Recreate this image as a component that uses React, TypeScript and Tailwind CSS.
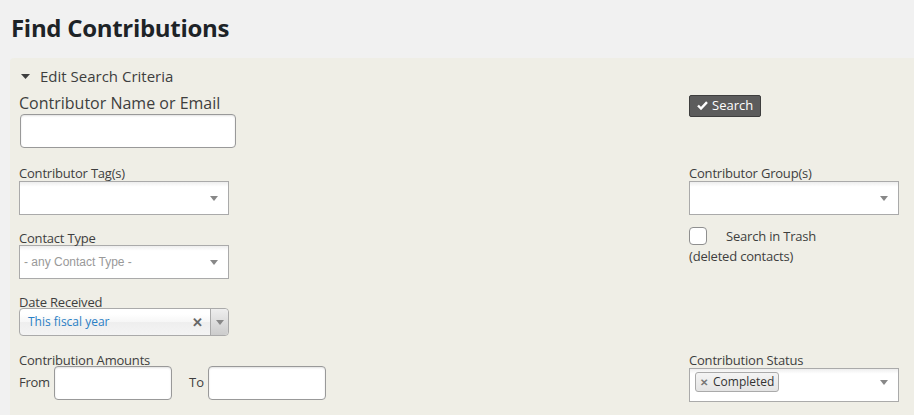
import React from "react";

const font = { fontFamily: '"Open Sans", "Noto Sans", sans-serif' };

function Arrow() {
  return (
    <svg width="8" height="5" viewBox="0 0 8 5" className="block">
      <path d="M0 0 L8 0 L4 5 Z" fill="#888" />
    </svg>
  );
}

function Select({ placeholder, width = "w-[210px]" }: { placeholder?: string; width?: string }) {
  return (
    <div
      className={`${width} h-[34px] border border-[#aaaaaa] bg-[linear-gradient(to_bottom,#eeeeee_0%,#ffffff_15%)] flex items-center justify-between pl-[4px] pr-[10px]`}
    >
      <span
        className="text-[12px] text-[#999999]"
        style={{ fontFamily: '"Liberation Sans", Arial, sans-serif' }}
      >
        {placeholder}
      </span>
      <Arrow />
    </div>
  );
}

function TextInput({ w }: { w: string }) {
  return (
    <div
      className={`${w} h-[34px] rounded-[4px] border border-[#999999] bg-white shadow-[inset_0_1px_2px_rgba(0,0,0,0.12)]`}
    />
  );
}

export default function App() {
  return (
    <div className="w-[914px] h-[415px] overflow-hidden bg-[#f1f1f1] text-[#3e3e3e]" style={font}>
      <h1 className="pl-[11px] pt-[12px] h-[58px] text-[24px] font-bold leading-[32px] text-[#1d2327] tracking-[-0.3px]">
        Find Contributions
      </h1>
      <div className="ml-[10px] h-[400px] rounded-tl-[4px] bg-[#efeee6] pl-[9px]">
        <div className="flex items-center h-[34px] pt-[2px]">
          <svg width="9" height="5" viewBox="0 0 9 5" className="ml-[2px] mr-[10px]">
            <path d="M0 0 L9 0 L4.5 5 Z" fill="#3e3e3e" />
          </svg>
          <span className="text-[15px] text-[#3e3e3e]">Edit Search Criteria</span>
        </div>

        {/* Row 1 */}
        <div className="grid grid-cols-[670px_1fr]">
          <div>
            <div className="text-[16px] leading-[22px] text-[#3e3e3e]">Contributor Name or Email</div>
            <div className="pl-[1px]">
              <TextInput w="w-[216px]" />
            </div>
          </div>
          <div>
            <div className="inline-flex items-center h-[22px] px-[7px] rounded-[2px] border border-[#3e3e3e] bg-[#5c5c5c] text-white text-[13px]">
              <svg width="11" height="9" viewBox="0 0 11 9" className="mr-[4px]">
                <path d="M1 4.5 L4 7.5 L10 1.2" stroke="#fff" strokeWidth="2.4" fill="none" />
              </svg>
              Search
            </div>
          </div>
        </div>

        {/* Row 2 */}
        <div className="grid grid-cols-[670px_1fr] mt-[17px]">
          <div>
            <div className="text-[13px] leading-[16px] h-[16px] tracking-[-0.2px]">Contributor Tag(s)</div>
            <Select />
          </div>
          <div>
            <div className="text-[13px] leading-[16px] h-[16px] tracking-[-0.2px]">Contributor Group(s)</div>
            <Select />
          </div>
        </div>

        {/* Row 3 */}
        <div className="grid grid-cols-[670px_1fr] mt-[15px]">
          <div>
            <div className="text-[13px] leading-[16px] h-[15px] tracking-[-0.2px]">Contact Type</div>
            <Select placeholder="- any Contact Type -" />
          </div>
          <div className="-mt-[3px]">
            <div className="flex items-center h-[18px]">
              <div className="w-[18px] h-[18px] rounded-[4px] border border-[#8f8f8f] bg-white" />
              <span className="ml-[19px] text-[13px] leading-[16px] tracking-[-0.2px]">Search in Trash</span>
            </div>
            <div className="text-[13px] leading-[16px] mt-[3px] tracking-[-0.2px]">(deleted contacts)</div>
          </div>
        </div>

        {/* Row 4 */}
        <div className="mt-[15px]">
          <div className="text-[13px] leading-[16px] h-[14px] tracking-[-0.2px]">Date Received</div>
          <div className="w-[210px] h-[28px] rounded-[4px] border border-[#aaaaaa] bg-[linear-gradient(to_bottom,#ffffff_20%,#f6f6f6_50%,#eeeeee_52%,#f4f4f4_100%)] flex items-center">
            <span className="flex-1 pl-[8px] text-[12px] text-[#2a80c5]">This fiscal year</span>
            <span className="text-[#666] text-[13px] font-bold mr-[7px] leading-none">✕</span>
            <div className="h-full w-[18px] border-l border-[#aaaaaa] rounded-r-[4px] bg-[linear-gradient(to_bottom,#eeeeee,#cccccc)] flex items-center justify-center">
              <Arrow />
            </div>
          </div>
        </div>

        {/* Row 5 */}
        <div className="grid grid-cols-[670px_1fr] mt-[16px]">
          <div>
            <div className="text-[13px] leading-[16px] h-[14px] tracking-[-0.2px]">Contribution Amounts</div>
            <div className="flex items-center">
              <span className="text-[13px] w-[35px] tracking-[-0.3px]">From</span>
              <TextInput w="w-[118px]" />
              <span className="text-[13px] ml-[17px] w-[19px]">To</span>
              <TextInput w="w-[118px]" />
            </div>
          </div>
          <div>
            <div className="text-[13px] leading-[16px] h-[16px] tracking-[-0.2px]">Contribution Status</div>
            <div className="w-[210px] h-[34px] border border-[#aaaaaa] bg-[linear-gradient(to_bottom,#eeeeee_0%,#ffffff_15%)] flex items-start justify-between pl-[5px] pr-[10px] pt-[3px]">
              <div className="flex items-center h-[20px] px-[4px] rounded-[3px] border border-[#aaaaaa] bg-[linear-gradient(to_bottom,#f4f4f4,#e4e4e4)] text-[12px] text-[#333]">
                <span className="text-[#777] text-[10px] font-bold mr-[5px]">✕</span>
                Completed
              </div>
              <div className="pt-[8px]">
                <Arrow />
              </div>
            </div>
          </div>
        </div>
      </div>
    </div>
  );
}
